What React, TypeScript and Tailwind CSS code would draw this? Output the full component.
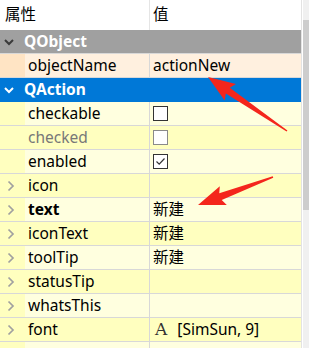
import React from 'react';

type Row = {
  name: string;
  kind: 'prop';
  expandable?: boolean;
  bold?: boolean;
  disabled?: boolean;
  value?: React.ReactNode;
};

const font = { fontFamily: '"Noto Sans", "Noto Sans CJK SC", sans-serif' };

const Chevron = ({ dir, color }: { dir: 'down' | 'right'; color: string }) => (
  <svg width="12" height="12" viewBox="0 0 12 12" className="shrink-0">
    {dir === 'down' ? (
      <path d="M2 4 L6 8 L10 4" fill="none" stroke={color} strokeWidth="2" />
    ) : (
      <path d="M3.5 1.5 L8 6 L3.5 10.5" fill="none" stroke={color} strokeWidth="1.7" />
    )}
  </svg>
);

const Check = ({ on, dim }: { on?: boolean; dim?: boolean }) => (
  <div
    className={`w-[15px] h-[15px] bg-white border flex items-center justify-center ${
      dim ? 'border-[#8a8a8a]' : 'border-[#333333]'
    }`}
  >
    {on && (
      <svg width="11" height="11" viewBox="0 0 11 11">
        <path d="M1.5 5.5 L4.2 8.2 L9.5 2.5" fill="none" stroke="#333" strokeWidth="1.2" />
      </svg>
    )}
  </div>
);

const rows: Row[] = [
  { name: 'checkable', kind: 'prop', value: <Check /> },
  { name: 'checked', kind: 'prop', disabled: true, value: <Check dim /> },
  { name: 'enabled', kind: 'prop', value: <Check on /> },
  { name: 'icon', kind: 'prop', expandable: true },
  { name: 'text', kind: 'prop', expandable: true, bold: true, value: '新建' },
  { name: 'iconText', kind: 'prop', expandable: true, value: '新建' },
  { name: 'toolTip', kind: 'prop', expandable: true, value: '新建' },
  { name: 'statusTip', kind: 'prop', expandable: true },
  { name: 'whatsThis', kind: 'prop', expandable: true },
  {
    name: 'font',
    kind: 'prop',
    expandable: true,
    value: (
      <span className="flex items-center">
        <span
          className="text-[17px] leading-none ml-[2px] mr-[10px] text-[#333]"
          style={{ fontFamily: '"DejaVu Serif", "Liberation Serif", serif' }}
        >
          A
        </span>
        [SimSun, 9]
      </span>
    ),
  },
  { name: '', kind: 'prop' },
];

function arrowPoints(tx: number, ty: number, px: number, py: number) {
  // tail (tx,ty) -> tip (px,py)
  const dx = px - tx;
  const dy = py - ty;
  const len = Math.hypot(dx, dy);
  const ux = dx / len;
  const uy = dy / len;
  const nx = -uy;
  const ny = ux;
  const headLen = 24;
  const w0 = 1.5;
  const w1 = 7;
  const hw = 10;
  const bx = px - ux * headLen;
  const by = py - uy * headLen;
  const pts = [
    [tx + nx * w0 / 2, ty + ny * w0 / 2],
    [bx + nx * w1 / 2, by + ny * w1 / 2],
    [bx - ux * 3 + nx * hw, by - uy * 3 + ny * hw],
    [px, py],
    [bx - ux * 3 - nx * hw, by - uy * 3 - ny * hw],
    [bx - nx * w1 / 2, by - ny * w1 / 2],
    [tx - nx * w0 / 2, ty - ny * w0 / 2],
  ];
  return pts.map((p) => p.join(',')).join(' ');
}

export default function App() {
  return (
    <div className="relative w-[309px] h-[348px] overflow-hidden bg-white text-[15.5px] text-[#000]" style={font}>
      <div className="flex h-full">
        <div className="w-[302px] flex flex-col border-r border-[#e3e3e3]">
          {/* header */}
          <div className="flex h-[30px] shrink-0 bg-white">
            <div className="w-[150px] pl-[5px] flex items-center border-r border-[#e5e5e5]">属性</div>
            <div className="flex-1 pl-[3px] flex items-center">值</div>
          </div>

          {/* QObject group */}
          <div className="flex items-center h-[24px] shrink-0 bg-[#a0a0a0] border-b border-[#d8d8d8] font-bold text-white">
            <div className="w-[24px] pl-[3px] flex items-center">
              <Chevron dir="down" color="#3a3a3a" />
            </div>
            QObject
          </div>

          {/* objectName */}
          <div className="flex h-[24px] shrink-0 border-b border-[#d8d8d8]">
            <div className="w-[25px] bg-[#ffe4c4]" />
            <div className="w-[125px] pl-[3px] flex items-center bg-[#fff0df] border-r border-[#d8d8d8]">objectName</div>
            <div className="flex-1 pl-[3px] flex items-center bg-[#fff0df]">actionNew</div>
          </div>

          {/* QAction group */}
          <div className="flex items-center h-[24px] shrink-0 bg-[#0078d7] font-bold text-white">
            <div className="w-[24px] pl-[3px] flex items-center">
              <Chevron dir="down" color="#ffffff" />
            </div>
            QAction
          </div>

          {rows.map((r, i) => {
            const light = i % 2 === 0;
            const cell = light ? 'bg-[#ffffdf]' : 'bg-[#ffffbf]';
            return (
              <div key={i} className="flex h-[24px] shrink-0 border-b border-[#d8d8d8]">
                <div className="w-[25px] bg-[#ffffbf] flex items-center pl-[5px]">
                  {r.expandable && <Chevron dir="right" color="#a0a0a0" />}
                </div>
                <div
                  className={`w-[125px] pl-[3px] flex items-center border-r border-[#d8d8d8] ${cell} ${
                    r.bold ? 'font-bold' : ''
                  } ${r.disabled ? 'text-[#787878]' : ''}`}
                >
                  {r.name}
                </div>
                <div className={`flex-1 pl-[3px] flex items-center ${cell}`}>{r.value}</div>
              </div>
            );
          })}
        </div>

        {/* scrollbar */}
        <div className="flex-1 flex flex-col bg-[#f0f0f0] ml-px">
          <div className="h-[20px]" />
          <div className="h-[190px] bg-[#cdcdcd]" />
        </div>
      </div>

      {/* annotation arrows */}
      <svg className="absolute inset-0 pointer-events-none" width="309" height="348">
        <polygon points={arrowPoints(287, 131, 208, 77)} fill="#f4261c" />
        <polygon points={arrowPoints(273, 177, 198, 205)} fill="#f4261c" />
      </svg>
    </div>
  );
}
